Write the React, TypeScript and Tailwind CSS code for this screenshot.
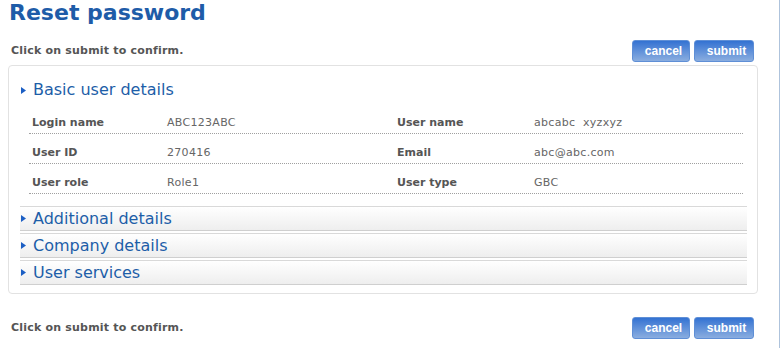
import React from "react";

const Arrow = () => (
  <svg width="5" height="7" viewBox="0 0 5 7" className="shrink-0">
    <polygon points="0,0 5,3.5 0,7" fill="#1c5fc4" />
  </svg>
);

const Btn = ({ label, w }: { label: string; w: string }) => (
  <button
    className={`${w} h-[22px] rounded-[3px] bg-gradient-to-b from-[#3372d2] to-[#8aaddf] border border-[#5f8fd6] pl-[5px] text-white text-[12px] font-bold leading-none flex items-center justify-center`}
    style={{ fontFamily: '"Liberation Sans", Arial, sans-serif' }}
  >
    {label}
  </button>
);

const ActionRow = () => (
  <div className="flex items-center justify-between h-[22px] pl-[11px] pr-[25px]">
    <span className="text-[11px] font-bold text-[#555] tracking-[0.2px]">Click on submit to confirm.</span>
    <div className="flex gap-[4px]">
      <Btn label="cancel" w="w-[58px]" />
      <Btn label="submit" w="w-[60px]" />
    </div>
  </div>
);

const rows: [string, string, string, string][] = [
  ["Login name", "ABC123ABC", "User name", "abcabc  xyzxyz"],
  ["User ID", "270416", "Email", "abc@abc.com"],
  ["User role", "Role1", "User type", "GBC"],
];

const Bar = ({ title }: { title: string }) => (
  <div className="h-[25px] border-t border-b border-t-[#d9d9d9] border-b-[#cfcfcf] bg-gradient-to-b from-white to-[#eeeeee] flex items-center pl-[1px] gap-[7px]">
    <Arrow />
    <span className="text-[16px] leading-[20px] text-[#1d5ea8]">{title}</span>
  </div>
);

export default function App() {
  return (
    <div className="w-[781px] h-[348px] bg-white" style={{ fontFamily: '"DejaVu Sans", Verdana, sans-serif' }}>
      <div className="w-[780px] h-[348px] border-r border-[#aec3dc]">
        <h1 className="pl-[9px] text-[22px] leading-[26px] font-bold text-[#1e5ca8]">Reset password</h1>
        <div className="mt-[14px]">
          <ActionRow />
        </div>
        <div className="mt-[3px] ml-[8px] w-[750px] h-[229px] border border-[#e2e2e2] rounded-[4px]">
          <div className="mt-[14px] mb-[4px] flex items-center h-[20px] pl-[12px] gap-[7px]">
            <Arrow />
            <span className="text-[16px] leading-[20px] text-[#1d5ea8]">Basic user details</span>
          </div>
          <div className="ml-[20px] w-[714px]">
            {rows.map((r) => (
              <div
                key={r[0]}
                className="h-[30px] pt-[12px] border-b border-dotted border-[#a0a0a0] grid grid-cols-[135px_230px_137px_1fr] text-[11px] leading-[14px] text-[#555]"
              >
                <span className="px-[3px] font-bold">{r[0]}</span>
                <span className="px-[3px] tracking-[0.3px] whitespace-pre text-[#666]">{r[1]}</span>
                <span className="px-[3px] font-bold">{r[2]}</span>
                <span className="px-[3px] tracking-[0.3px] whitespace-pre text-[#666]">{r[3]}</span>
              </div>
            ))}
          </div>
          <div className="mt-[12px] ml-[11px] w-[727px] flex flex-col gap-[2px]">
            <Bar title="Additional details" />
            <Bar title="Company details" />
            <Bar title="User services" />
          </div>
        </div>
        <div className="mt-[23px]">
          <ActionRow />
        </div>
      </div>
    </div>
  );
}
